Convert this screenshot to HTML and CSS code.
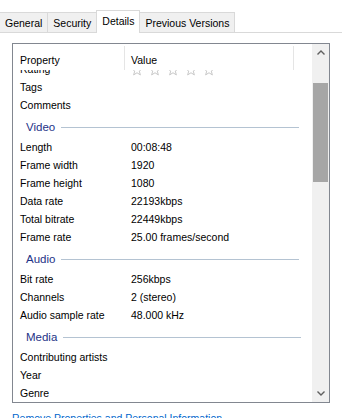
FILE: index.html
```html
<!DOCTYPE html>
<html>
<head>
    <title>Properties - Details</title>
    <link rel="stylesheet" href="styles.css">
</head>
<body>
    <div class="tabs">
        <div class="tab">General</div>
        <div class="tab">Security</div>
        <div class="tab active">Details</div>
        <div class="tab">Previous Versions</div>
    </div>

    <div class="page">
        <div class="list">
            <div class="list-main">
                <div class="header">
                    <div class="col-name">Property</div>
                    <div class="sep"></div>
                    <div class="col-value">Value</div>
                    <div class="sep sep-end"></div>
                </div>
                <div class="rows">
                    <div class="row"><span class="name">Rating</span>
                        <span class="stars">
                            <svg viewBox="0 0 10 10"><path d="M5 0.8 6.2 3.8 9.4 3.9 6.9 5.9 7.8 9.1 5 7.3 2.2 9.1 3.1 5.9 0.6 3.9 3.8 3.8Z"/></svg>
                            <svg viewBox="0 0 10 10"><path d="M5 0.8 6.2 3.8 9.4 3.9 6.9 5.9 7.8 9.1 5 7.3 2.2 9.1 3.1 5.9 0.6 3.9 3.8 3.8Z"/></svg>
                            <svg viewBox="0 0 10 10"><path d="M5 0.8 6.2 3.8 9.4 3.9 6.9 5.9 7.8 9.1 5 7.3 2.2 9.1 3.1 5.9 0.6 3.9 3.8 3.8Z"/></svg>
                            <svg viewBox="0 0 10 10"><path d="M5 0.8 6.2 3.8 9.4 3.9 6.9 5.9 7.8 9.1 5 7.3 2.2 9.1 3.1 5.9 0.6 3.9 3.8 3.8Z"/></svg>
                            <svg viewBox="0 0 10 10"><path d="M5 0.8 6.2 3.8 9.4 3.9 6.9 5.9 7.8 9.1 5 7.3 2.2 9.1 3.1 5.9 0.6 3.9 3.8 3.8Z"/></svg>
                        </span>
                    </div>
                    <div class="row"><span class="name">Tags</span></div>
                    <div class="row"><span class="name">Comments</span></div>

                    <div class="group"><span>Video</span><i></i></div>
                    <div class="row"><span class="name">Length</span><span class="value">00:08:48</span></div>
                    <div class="row"><span class="name">Frame width</span><span class="value">1920</span></div>
                    <div class="row"><span class="name">Frame height</span><span class="value">1080</span></div>
                    <div class="row"><span class="name">Data rate</span><span class="value">22193kbps</span></div>
                    <div class="row"><span class="name">Total bitrate</span><span class="value">22449kbps</span></div>
                    <div class="row"><span class="name">Frame rate</span><span class="value">25.00 frames/second</span></div>

                    <div class="group"><span>Audio</span><i></i></div>
                    <div class="row"><span class="name">Bit rate</span><span class="value">256kbps</span></div>
                    <div class="row"><span class="name">Channels</span><span class="value">2 (stereo)</span></div>
                    <div class="row"><span class="name">Audio sample rate</span><span class="value">48.000 kHz</span></div>

                    <div class="group"><span>Media</span><i></i></div>
                    <div class="row"><span class="name">Contributing artists</span></div>
                    <div class="row"><span class="name">Year</span></div>
                    <div class="row"><span class="name">Genre</span></div>
                </div>
            </div>
            <div class="scrollbar">
                <div class="arrow">
                    <svg viewBox="0 0 8 5"><path d="M0.5 4.5 4 1 7.5 4.5"/></svg>
                </div>
                <div class="track">
                    <div class="thumb"></div>
                </div>
                <div class="arrow">
                    <svg viewBox="0 0 8 5"><path d="M0.5 0.5 4 4 7.5 0.5"/></svg>
                </div>
            </div>
        </div>
        <a class="remove" href="#">Remove Properties and Personal Information</a>
    </div>
</body>
</html>
```

FILE: styles.css
```css
body {
    margin: 0;
    background: #fff;
    font-family: 'Liberation Sans', Arial, sans-serif;
    font-size: 10.5px;
    color: #000;
    overflow: hidden;
}
.tabs {
    display: flex;
    align-items: flex-end;
    height: 33px;
    border-bottom: 1px solid #d9d9d9;
    box-sizing: border-box;
}
.tab {
    height: 20px;
    line-height: 20px;
    padding: 0 5px;
    background: #f0f0f0;
    border: 1px solid #d9d9d9;
    border-bottom: none;
    border-left: none;
    box-sizing: border-box;
    color: #000;
}
.tab.active {
    height: 23px;
    margin-bottom: -1px;
    background: #fff;
    line-height: 21px;
    border-left: 1px solid #d9d9d9;
    margin-left: -1px;
}
.page {
    padding: 10px 12px 0;
}
.list {
    display: flex;
    height: 360px;
    border: 1px solid #828790;
    box-sizing: border-box;
}
.list-main {
    flex: 1;
    position: relative;
    overflow: hidden;
}
.header {
    position: relative;
    z-index: 1;
    display: flex;
    height: 26px;
    background: #fff;
    padding-top: 2px;
    box-sizing: border-box;
}
.col-name {
    width: 104px;
    padding: 8px 0 0 7px;
}
.col-value {
    width: 162px;
    padding: 8px 0 0 6px;
}
.sep {
    width: 1px;
    background: #e5e5e5;
}
.rows {
    margin-top: -10px;
}
.row {
    display: flex;
    align-items: center;
    height: 18px;
    padding-left: 7px;
}
.name {
    width: 111px;
    flex-shrink: 0;
}
.stars {
    display: flex;
    gap: 6px;
    margin-top: 2px;
}
.stars svg {
    width: 12px;
    height: 12px;
    fill: none;
    stroke: #c4c4c4;
    stroke-width: 0.8;
}
.group {
    display: flex;
    align-items: center;
    height: 24px;
    padding-left: 13px;
    padding-top: 1px;
    box-sizing: border-box;
    color: #1e3287;
    font-size: 11.5px;
}
.group i {
    flex: 1;
    height: 1px;
    margin: 1px 0 0 6px;
    background: #b4c3d2;
    max-width: 238px;
}
.scrollbar {
    width: 17px;
    display: flex;
    flex-direction: column;
    background: #f0f0f0;
}
.arrow {
    height: 17px;
    display: flex;
    align-items: center;
    justify-content: center;
}
.arrow svg {
    width: 8px;
    height: 5px;
    fill: none;
    stroke: #606060;
    stroke-width: 1.4;
}
.track {
    flex: 1;
    padding-top: 22px;
}
.thumb {
    height: 99px;
    margin: 0 1px;
    background: #a6a6a6;
}
.remove {
    display: block;
    margin-top: 9px;
    color: #0066cc;
    text-decoration: none;
}
```
